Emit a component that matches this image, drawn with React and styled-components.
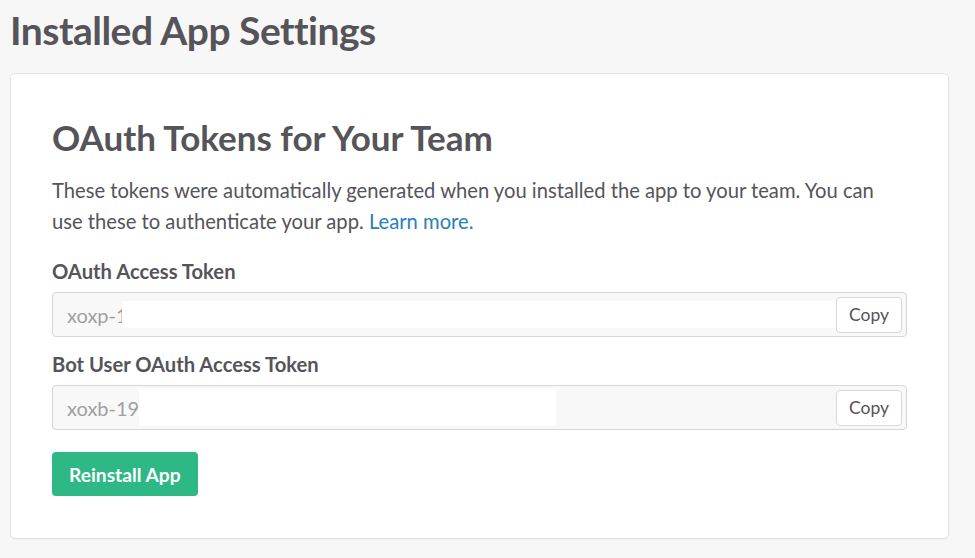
import styled, { createGlobalStyle } from "styled-components";

const GlobalStyle = createGlobalStyle`
  body {
    margin: 0;
    background: #f7f7f7;
    font-family: Lato, "Open Sans", sans-serif;
    color: #555459;
  }
  * {
    box-sizing: border-box;
  }
`;

const Page = styled.div`
  padding: 8px 26px 20px 10px;
`;

const PageTitle = styled.h1`
  margin: 0 0 21px;
  font-size: 39px;
  line-height: 44px;
  font-weight: 700;
  color: #555459;
  letter-spacing: -0.5px;
`;

const Card = styled.div`
  background: #fff;
  border: 1px solid #e3e3e3;
  border-radius: 5px;
  padding: 44px 41px 42px;
  width: 939px;
  box-shadow: 0 1px 1px rgba(0, 0, 0, 0.04);
`;

const CardTitle = styled.h2`
  margin: 0 0 19px;
  font-size: 35px;
  line-height: 38px;
  font-weight: 700;
  color: #555459;
`;

const Intro = styled.p`
  margin: 0 0 22px;
  font-size: 20.2px;
  line-height: 31px;
  color: #555459;

  a {
    color: #2a80b9;
    text-decoration: none;
  }
`;

const Label = styled.div`
  font-size: 20.2px;
  line-height: 24px;
  font-weight: 700;
  color: #555459;
  margin-bottom: 9px;
`;

const Field = styled.div`
  display: flex;
  align-items: center;
  height: 45px;
  border: 1px solid #d6d6d6;
  border-radius: 4px;
  background: #f8f8f8;
  padding: 0 4px 0 14px;
  margin-bottom: ${(p) => p.$gap || 0}px;
`;

const Token = styled.span`
  font-size: 20px;
  color: #a0a0a2;
`;

const Redact = styled.span`
  align-self: ${(p) => (p.$tall ? "stretch" : "center")};
  height: ${(p) => (p.$tall ? "auto" : "27px")};
  margin: ${(p) => (p.$tall ? "3px 0" : "0 0 0 -6px")};
  width: ${(p) => p.$w}px;
  flex: ${(p) => (p.$fill ? 1 : "none")};
  background: #fff;
`;

const Spacer = styled.div`
  flex: 1;
`;

const CopyButton = styled.button`
  width: 66px;
  height: 36px;
  padding: 0;
  border: 1px solid #d8d8d8;
  border-radius: 4px;
  background: #fff;
  font-family: Lato, sans-serif;
  font-size: 17.5px;
  color: #555459;
  cursor: pointer;
`;

const Primary = styled.button`
  margin-top: 22px;
  height: 44px;
  padding: 0 17px;
  border: none;
  border-radius: 4px;
  background: #2eb886;
  color: #fff;
  font-family: Lato, sans-serif;
  font-size: 19.2px;
  font-weight: 700;
  cursor: pointer;
`;

export default function App() {
  return (
    <>
      <GlobalStyle />
      <Page>
        <PageTitle>Installed App Settings</PageTitle>
        <Card>
          <CardTitle>OAuth Tokens for Your Team</CardTitle>
          <Intro>
            These tokens were automatically generated when you installed the app to your team. You can
            <br />
            use these to authenticate your app. <a href="#">Learn more.</a>
          </Intro>
          <Label>OAuth Access Token</Label>
          <Field $gap={15}>
            <Token>xoxp-1</Token>
            <Redact $fill />
            <CopyButton>Copy</CopyButton>
          </Field>
          <Label>Bot User OAuth Access Token</Label>
          <Field>
            <Token>xoxb-19</Token>
            <Redact $tall $w={417} />
            <Spacer />
            <CopyButton>Copy</CopyButton>
          </Field>
          <Primary>Reinstall App</Primary>
        </Card>
      </Page>
    </>
  );
}
